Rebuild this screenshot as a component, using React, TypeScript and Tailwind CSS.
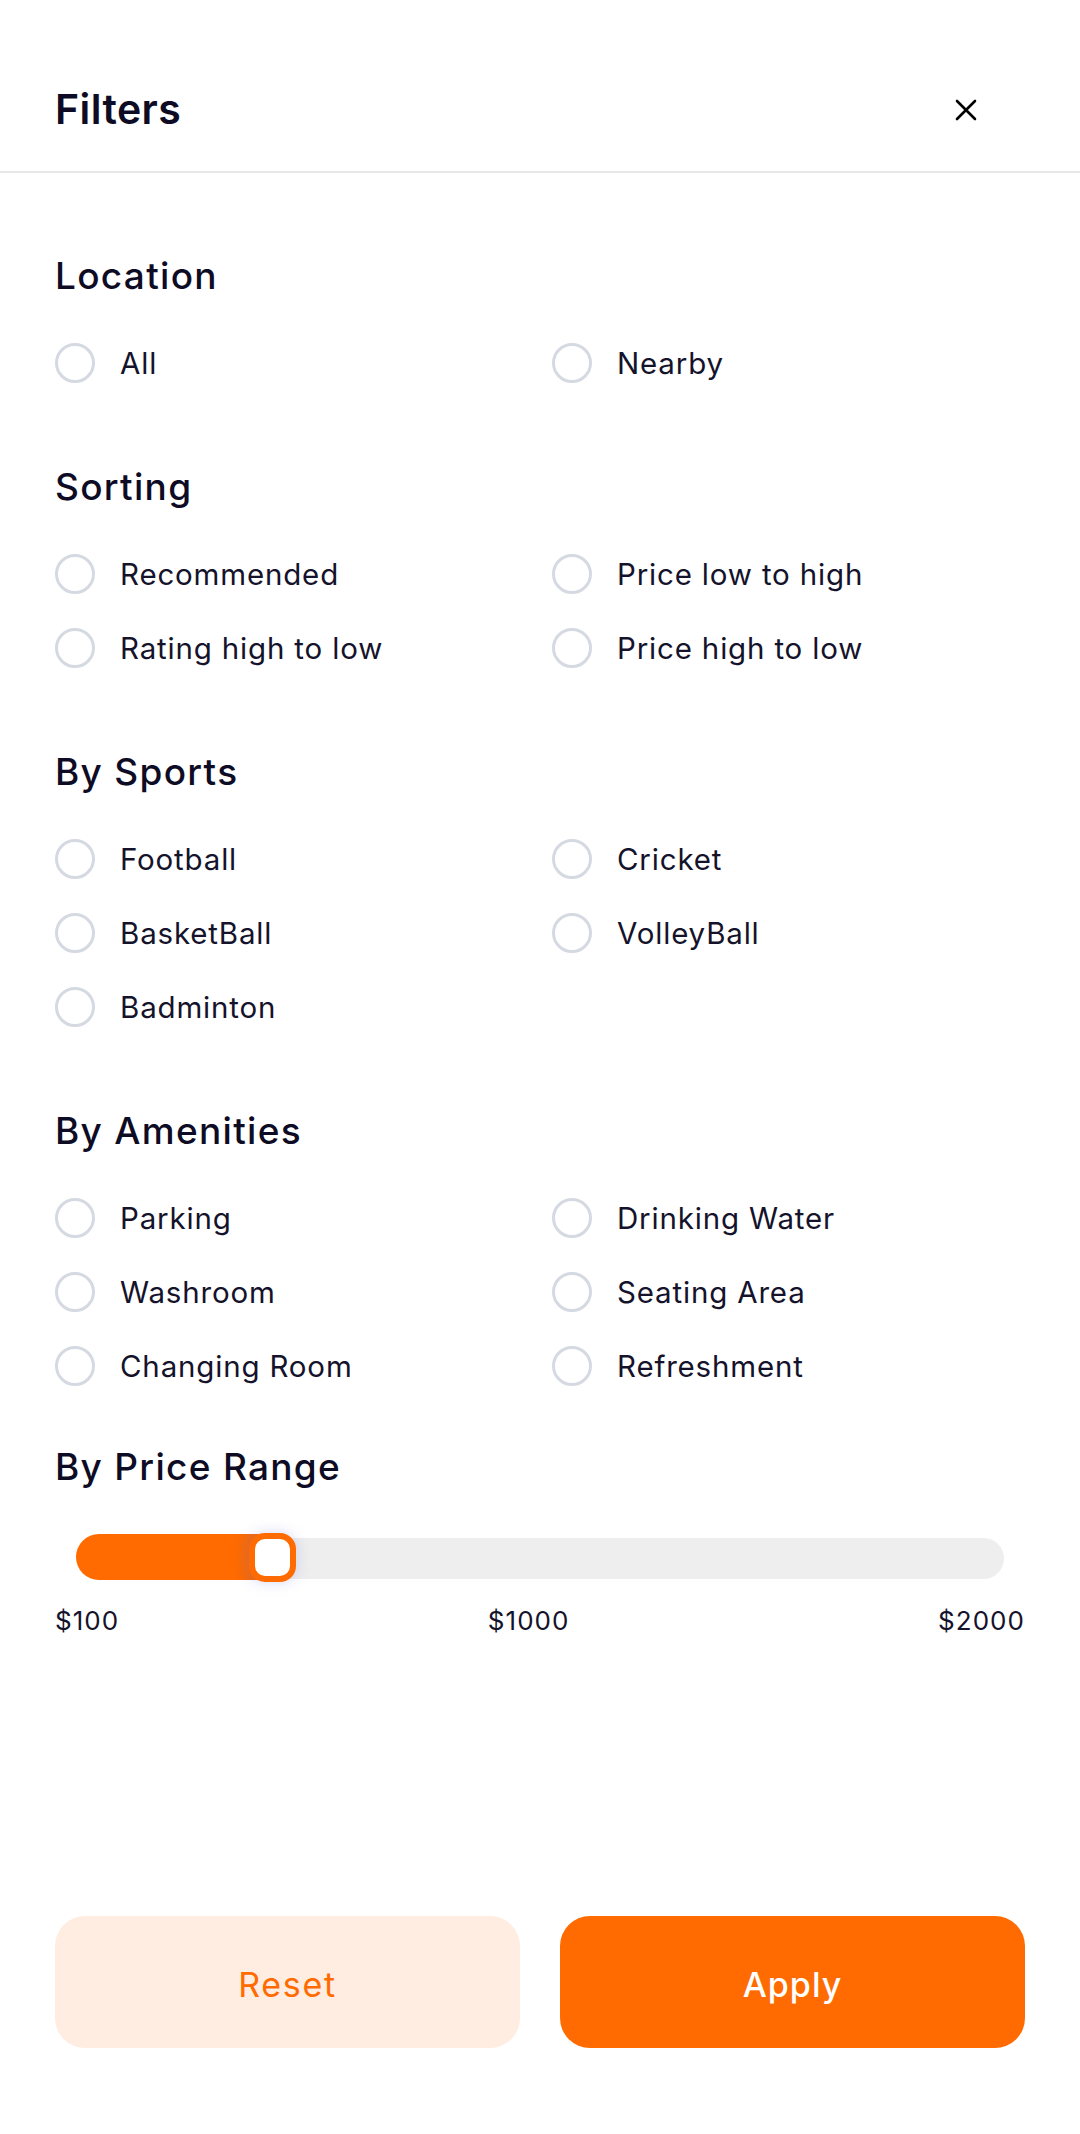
import React from "react";

type Section = {
  title: string;
  options: string[];
};

const sections: Section[] = [
  { title: "Location", options: ["All", "Nearby"] },
  {
    title: "Sorting",
    options: [
      "Recommended",
      "Price low to high",
      "Rating high to low",
      "Price high to low",
    ],
  },
  {
    title: "By Sports",
    options: ["Football", "Cricket", "BasketBall", "VolleyBall", "Badminton"],
  },
  {
    title: "By Amenities",
    options: [
      "Parking",
      "Drinking Water",
      "Washroom",
      "Seating Area",
      "Changing Room",
      "Refreshment",
    ],
  },
];

const font = "font-['Inter','Liberation_Sans',sans-serif]";

const Radio = ({ label }: { label: string }) => (
  <label className="flex h-[74px] cursor-pointer items-center gap-[25px]">
    <span className="box-border h-10 w-10 shrink-0 rounded-full border-[3px] border-[#d5d9e1] bg-white" />
    <span className="pt-[2px] text-[29.5px] leading-none tracking-[0.028em] text-[#14132b]">
      {label}
    </span>
  </label>
);

const Heading = ({ children }: { children: React.ReactNode }) => (
  <h2 className="flex h-11 items-center text-[37px] leading-none font-medium tracking-[0.035em] text-[#0e0c24]">
    {children}
  </h2>
);

const PriceSlider = () => {
  const fill = 196;
  return (
    <div className="mx-[21px] mt-[45px]">
      <div className="relative flex h-[50px] items-center">
        <div className="h-[41px] w-full rounded-full bg-[#eeeeee]" />
        <div
          className="absolute top-[1px] left-0 h-[46px] rounded-l-full bg-gradient-to-r from-[#ff6b00] from-80% to-[#e8670f]"
          style={{ width: fill }}
        />
        <div
          className="absolute top-0 box-border h-[49px] w-[47px] rounded-[16px] border-[6px] border-[#ff6b00] bg-white shadow-[0_0_14px_rgba(110,110,230,0.28)]"
          style={{ left: fill - 23 }}
        />
      </div>
    </div>
  );
};

export default function App() {
  return (
    <div className={`${font} flex min-h-screen flex-col bg-white`}>
      <header className="box-border flex h-[173px] items-center justify-between border-b-2 border-[#e7e7e7] pt-[48px] pr-[103px] pl-[55px]">
        <h1 className="text-[41px] leading-none font-semibold tracking-[0.01em] text-[#0e0c24]">
          Filters
        </h1>
        <button className="flex h-[22px] w-[22px] items-center justify-center">
          <svg width="22" height="22" viewBox="0 0 22 22" fill="none">
            <path
              d="M2 2L20 20M20 2L2 20"
              stroke="#000"
              strokeWidth="2.6"
              strokeLinecap="round"
            />
          </svg>
        </button>
      </header>

      <main className="px-[55px] pt-[80px]">
        {sections.map((s, i) => (
          <section key={s.title} className={i === 0 ? "" : "mt-16"}>
            <Heading>{s.title}</Heading>
            <div className="mt-[29px] grid grid-cols-2 gap-x-6">
              {s.options.map((o) => (
                <Radio key={o} label={o} />
              ))}
            </div>
          </section>
        ))}

        <section className="mt-[41px]">
          <Heading>By Price Range</Heading>
          <PriceSlider />
          <div className="mt-5 flex h-9 items-center justify-between text-[26px] leading-none tracking-[0.04em] text-[#14132b]">
            <span>$100</span>
            <span>$1000</span>
            <span>$2000</span>
          </div>
        </section>
      </main>

      <footer className="mt-auto grid grid-cols-2 gap-10 px-[55px] pb-[86px]">
        <button className="h-[132px] rounded-[30px] bg-[#ffede2] pt-1 text-[34px] tracking-[0.05em] text-[#ff6b00]">
          Reset
        </button>
        <button className="h-[132px] rounded-[30px] bg-[#ff6b00] pt-1 text-[34px] font-medium tracking-[0.03em] text-white">
          Apply
        </button>
      </footer>
    </div>
  );
}
